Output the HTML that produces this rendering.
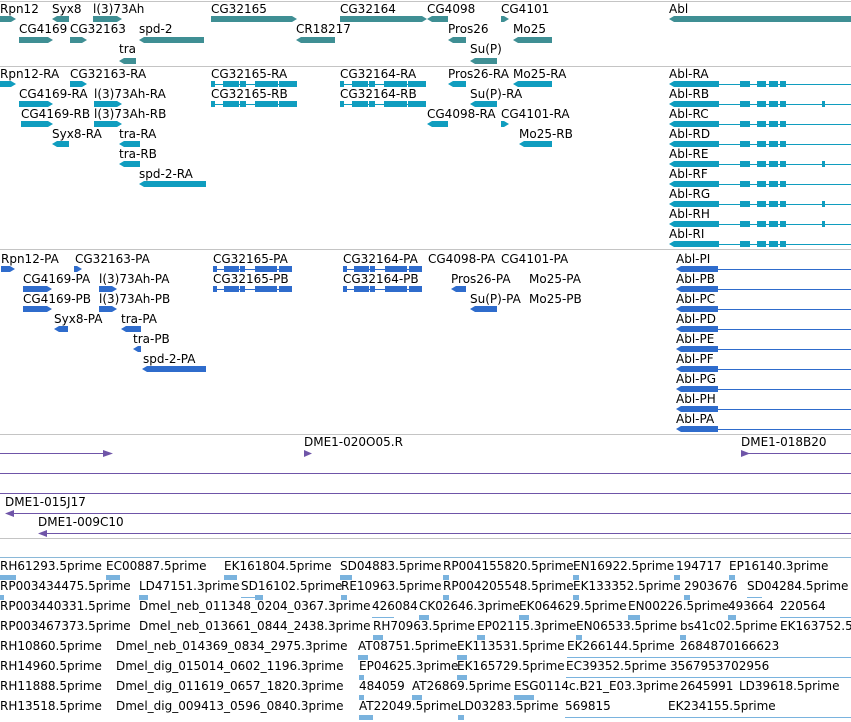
<!DOCTYPE html>
<html><head><meta charset="utf-8"><style>
body{margin:0;width:851px;height:722px;background:#fff;position:relative;overflow:hidden}
.t{position:absolute;font:12px "DejaVu Sans","Liberation Sans",sans-serif;line-height:14px;white-space:nowrap;color:#000}
.b{position:absolute;height:6px}
.g{background:#3f8f94}.c{background:#109dbf}.p{background:#2f6ccc}.v{background:#6f55a8}.s{background:#7ab3de}
.r{clip-path:polygon(0 0,calc(100% - 5px) 0,100% 50%,calc(100% - 5px) 100%,0 100%)}
.l{clip-path:polygon(5px 0,100% 0,100% 100%,5px 100%,0 50%)}
.hl{position:absolute;height:1px}
.gr{background:#c4c4c4}
</style></head><body>
<div class="hl gr" style="top:1px;left:0;width:851px"></div>
<div class="hl gr" style="top:66px;left:0;width:851px"></div>
<div class="hl gr" style="top:249px;left:0;width:851px"></div>
<div class="hl gr" style="top:434px;left:0;width:851px"></div>
<div class="hl gr" style="top:538px;left:0;width:851px"></div>
<div class="hl" style="top:557px;left:0;width:851px;background:#8ab8d8"></div>

<div class="t" style="left:0;top:2px">Rpn12</div><div class="b g r" style="left:0;top:16px;width:16px"></div>
<div class="t" style="left:52px;top:2px">Syx8</div><div class="b g l" style="left:52px;top:16px;width:17px"></div>
<div class="t" style="left:93px;top:2px">l(3)73Ah</div><div class="b g r" style="left:93px;top:16px;width:29px"></div>
<div class="t" style="left:211px;top:2px">CG32165</div><div class="b g r" style="left:211px;top:16px;width:86px"></div>
<div class="t" style="left:340px;top:2px">CG32164</div><div class="b g r" style="left:340px;top:16px;width:87px"></div>
<div class="t" style="left:427px;top:2px">CG4098</div><div class="b g l" style="left:427px;top:16px;width:21px"></div>
<div class="t" style="left:501px;top:2px">CG4101</div><div class="b g r" style="left:501px;top:16px;width:8px"></div>
<div class="t" style="left:669px;top:2px">Abl</div><div class="b g l" style="left:669px;top:16px;width:182px"></div>
<div class="t" style="left:19px;top:22px">CG4169</div><div class="b g r" style="left:19px;top:37px;width:34px"></div>
<div class="t" style="left:70px;top:22px">CG32163</div><div class="b g r" style="left:70px;top:37px;width:17px"></div>
<div class="t" style="left:139px;top:22px">spd-2</div><div class="b g l" style="left:139px;top:37px;width:65px"></div>
<div class="t" style="left:296px;top:22px">CR18217</div><div class="b g l" style="left:296px;top:37px;width:39px"></div>
<div class="t" style="left:448px;top:22px">Pros26</div><div class="b g l" style="left:448px;top:37px;width:18px"></div>
<div class="t" style="left:513px;top:22px">Mo25</div><div class="b g l" style="left:513px;top:37px;width:39px"></div>
<div class="t" style="left:119px;top:42px">tra</div><div class="b g l" style="left:119px;top:58px;width:17px"></div>
<div class="t" style="left:470px;top:42px">Su(P)</div><div class="b g l" style="left:470px;top:58px;width:27px"></div>

<div class="t" style="left:0;top:67px">Rpn12-RA</div><div class="b c r" style="left:0;top:81px;width:16px"></div>
<div class="t" style="left:70px;top:67px">CG32163-RA</div><div class="b c r" style="left:70px;top:81px;width:17px"></div>
<div class="t" style="left:211px;top:67px">CG32165-RA</div>
<div class="t" style="left:340px;top:67px">CG32164-RA</div>
<div class="t" style="left:448px;top:67px">Pros26-RA</div><div class="b c l" style="left:448px;top:81px;width:18px"></div>
<div class="t" style="left:513px;top:67px">Mo25-RA</div><div class="b c l" style="left:513px;top:81px;width:39px"></div>
<div class="t" style="left:19px;top:87px">CG4169-RA</div><div class="b c r" style="left:19px;top:101px;width:34px"></div>
<div class="t" style="left:94px;top:87px">l(3)73Ah-RA</div><div class="b c r" style="left:94px;top:101px;width:28px"></div>
<div class="t" style="left:211px;top:87px">CG32165-RB</div>
<div class="t" style="left:340px;top:87px">CG32164-RB</div>
<div class="t" style="left:470px;top:87px">Su(P)-RA</div><div class="b c l" style="left:470px;top:101px;width:27px"></div>
<div class="t" style="left:21px;top:107px">CG4169-RB</div><div class="b c r" style="left:21px;top:121px;width:32px"></div>
<div class="t" style="left:94px;top:107px">l(3)73Ah-RB</div><div class="b c r" style="left:94px;top:121px;width:28px"></div>
<div class="t" style="left:427px;top:107px">CG4098-RA</div><div class="b c l" style="left:427px;top:121px;width:21px"></div>
<div class="t" style="left:501px;top:107px">CG4101-RA</div><div class="b c r" style="left:501px;top:121px;width:8px"></div>
<div class="t" style="left:52px;top:127px">Syx8-RA</div><div class="b c l" style="left:52px;top:141px;width:17px"></div>
<div class="t" style="left:119px;top:127px">tra-RA</div><div class="b c l" style="left:119px;top:141px;width:21px"></div>
<div class="t" style="left:519px;top:127px">Mo25-RB</div><div class="b c l" style="left:519px;top:141px;width:33px"></div>
<div class="t" style="left:119px;top:147px">tra-RB</div><div class="b c l" style="left:119px;top:161px;width:21px"></div>
<div class="t" style="left:139px;top:167px">spd-2-RA</div><div class="b c l" style="left:139px;top:181px;width:67px"></div>

<svg style="position:absolute;left:0;top:0" width="851" height="722">
<g fill="#109dbf" stroke="#109dbf">
<g id="ex1"><line x1="211" y1="84.5" x2="297" y2="84.5"/><rect x="211" y="81" width="4" height="6" stroke="none"/><rect x="223" y="81" width="16" height="6" stroke="none"/><rect x="240" y="81" width="6" height="6" stroke="none"/><rect x="255" y="81" width="23" height="6" stroke="none"/><rect x="279" y="81" width="18" height="6" stroke="none"/></g>
<use href="#ex1" y="20"/>
<use href="#ex1" x="129"/><use href="#ex1" x="129" y="20"/>
<g id="abl"><line x1="719" y1="84.5" x2="851" y2="84.5"/><polygon points="669,84 674,81 719,81 719,87 674,87" stroke="none"/><rect x="740" y="81" width="10" height="6" stroke="none"/><rect x="757" y="81" width="9" height="6" stroke="none"/><rect x="769" y="81" width="9" height="6" stroke="none"/><rect x="780" y="81" width="6" height="6" stroke="none"/></g>
<use href="#abl" y="20"/><use href="#abl" y="40"/><use href="#abl" y="60"/><use href="#abl" y="80"/><use href="#abl" y="100"/><use href="#abl" y="120"/><use href="#abl" y="140"/><use href="#abl" y="160"/>
<rect x="822" y="101" width="3" height="6" stroke="none"/><rect x="822" y="161" width="3" height="6" stroke="none"/><rect x="822" y="201" width="3" height="6" stroke="none"/><rect x="822" y="221" width="3" height="6" stroke="none"/>
</g>
<g fill="#2f6ccc" stroke="#2f6ccc">
<g id="pex"><line x1="213" y1="269.5" x2="292" y2="269.5"/><rect x="213" y="266" width="4" height="6" stroke="none"/><rect x="224" y="266" width="15" height="6" stroke="none"/><rect x="240" y="266" width="5" height="6" stroke="none"/><rect x="255" y="266" width="22" height="6" stroke="none"/><rect x="279" y="266" width="13" height="6" stroke="none"/></g>
<use href="#pex" y="20"/><use href="#pex" x="130"/><use href="#pex" x="130" y="20"/>
<g id="pabl"><line x1="718" y1="269.5" x2="851" y2="269.5"/><polygon points="676,269 681,266 718,266 718,272 681,272" stroke="none"/></g>
<use href="#pabl" y="20"/><use href="#pabl" y="40"/><use href="#pabl" y="60"/><use href="#pabl" y="80"/><use href="#pabl" y="100"/><use href="#pabl" y="120"/><use href="#pabl" y="140"/><use href="#pabl" y="160"/>
</g>
<g stroke="#6f55a8" fill="#6f55a8">
<line x1="0" y1="453.5" x2="108" y2="453.5"/><polygon points="103,450 113,453.5 103,457" stroke="none"/>
<polygon points="304,450 312,453.5 304,457" stroke="none"/>
<line x1="745" y1="453.5" x2="851" y2="453.5"/><polygon points="741,450 750,453.5 741,457" stroke="none"/>
<line x1="0" y1="473.5" x2="851" y2="473.5"/>
<line x1="0" y1="493.5" x2="851" y2="493.5"/>
<line x1="10" y1="513.5" x2="851" y2="513.5"/><polygon points="5,513.5 14,510 14,517" stroke="none"/>
<line x1="44" y1="533.5" x2="851" y2="533.5"/><polygon points="38,533.5 47,530 47,537" stroke="none"/>
</g>
<g fill="#7ab3de" stroke="#7ab3de">
<rect x="0" y="575" width="16" height="5" stroke="none"/><rect x="106" y="575" width="14" height="5" stroke="none"/><rect x="224" y="575" width="13" height="5" stroke="none"/><rect x="340" y="575" width="12" height="5" stroke="none"/><rect x="443" y="575" width="6" height="5" stroke="none"/><rect x="573" y="575" width="6" height="5" stroke="none"/><rect x="674" y="575" width="6" height="5" stroke="none"/><rect x="729" y="575" width="6" height="5" stroke="none"/>
<rect x="0" y="595" width="4" height="5" stroke="none"/><rect x="139" y="595" width="9" height="5" stroke="none"/><line x1="241" y1="597.5" x2="262" y2="597.5"/><rect x="255" y="595" width="8" height="5" stroke="none"/><rect x="341" y="595" width="6" height="5" stroke="none"/><rect x="443" y="595" width="6" height="5" stroke="none"/><rect x="573" y="595" width="6" height="5" stroke="none"/><rect x="684" y="595" width="6" height="5" stroke="none"/><line x1="747" y1="597.5" x2="762" y2="597.5"/>
<line x1="372" y1="617.5" x2="394" y2="617.5"/><rect x="419" y="615" width="10" height="5" stroke="none"/><rect x="519" y="615" width="10" height="5" stroke="none"/><rect x="628" y="615" width="12" height="5" stroke="none"/><rect x="728" y="615" width="8" height="5" stroke="none"/><line x1="780" y1="617.5" x2="851" y2="617.5"/>
<rect x="373" y="635" width="10" height="5" stroke="none"/><rect x="477" y="635" width="8" height="5" stroke="none"/><rect x="576" y="635" width="6" height="5" stroke="none"/><rect x="680" y="635" width="6" height="5" stroke="none"/>
<rect x="358" y="655" width="10" height="5" stroke="none"/><rect x="457" y="655" width="10" height="5" stroke="none"/><line x1="567" y1="657.5" x2="851" y2="657.5"/>
<rect x="359" y="675" width="5" height="5" stroke="none"/><rect x="457" y="675" width="10" height="5" stroke="none"/><line x1="566" y1="677.5" x2="851" y2="677.5"/>
<rect x="359" y="695" width="5" height="5" stroke="none"/><rect x="412" y="695" width="10" height="5" stroke="none"/><rect x="514" y="695" width="20" height="5" stroke="none"/>
<rect x="359" y="715" width="14" height="5" stroke="none"/><rect x="458" y="715" width="6" height="5" stroke="none"/><line x1="565" y1="717.5" x2="851" y2="717.5"/>
</g>
</svg>
<div class="t" style="left:669px;top:67px">Abl-RA</div>
<div class="t" style="left:669px;top:87px">Abl-RB</div>
<div class="t" style="left:669px;top:107px">Abl-RC</div>
<div class="t" style="left:669px;top:127px">Abl-RD</div>
<div class="t" style="left:669px;top:147px">Abl-RE</div>
<div class="t" style="left:669px;top:167px">Abl-RF</div>
<div class="t" style="left:669px;top:187px">Abl-RG</div>
<div class="t" style="left:669px;top:207px">Abl-RH</div>
<div class="t" style="left:669px;top:227px">Abl-RI</div>

<div class="t" style="left:1px;top:252px">Rpn12-PA</div><div class="b p r" style="left:1px;top:266px;width:14px"></div>
<div class="t" style="left:75px;top:252px">CG32163-PA</div><div class="b p r" style="left:74px;top:266px;width:8px"></div>
<div class="t" style="left:213px;top:252px">CG32165-PA</div>
<div class="t" style="left:343px;top:252px">CG32164-PA</div>
<div class="t" style="left:428px;top:252px">CG4098-PA</div>
<div class="t" style="left:501px;top:252px">CG4101-PA</div>
<div class="t" style="left:23px;top:272px">CG4169-PA</div><div class="b p r" style="left:23px;top:286px;width:29px"></div>
<div class="t" style="left:99px;top:272px">l(3)73Ah-PA</div><div class="b p r" style="left:99px;top:286px;width:18px"></div>
<div class="t" style="left:213px;top:272px">CG32165-PB</div>
<div class="t" style="left:343px;top:272px">CG32164-PB</div>
<div class="t" style="left:451px;top:272px">Pros26-PA</div><div class="b p l" style="left:451px;top:286px;width:15px"></div>
<div class="t" style="left:529px;top:272px">Mo25-PA</div>
<div class="t" style="left:23px;top:292px">CG4169-PB</div><div class="b p r" style="left:23px;top:306px;width:29px"></div>
<div class="t" style="left:99px;top:292px">l(3)73Ah-PB</div><div class="b p r" style="left:99px;top:306px;width:18px"></div>
<div class="t" style="left:470px;top:292px">Su(P)-PA</div><div class="b p l" style="left:470px;top:306px;width:27px"></div>
<div class="t" style="left:529px;top:292px">Mo25-PB</div>
<div class="t" style="left:54px;top:312px">Syx8-PA</div><div class="b p l" style="left:54px;top:326px;width:14px"></div>
<div class="t" style="left:121px;top:312px">tra-PA</div><div class="b p l" style="left:121px;top:326px;width:20px"></div>
<div class="t" style="left:133px;top:332px">tra-PB</div><div class="b p l" style="left:133px;top:346px;width:8px"></div>
<div class="t" style="left:143px;top:352px">spd-2-PA</div><div class="b p l" style="left:142px;top:366px;width:64px"></div>
<div class="t" style="left:676px;top:252px">Abl-PI</div>
<div class="t" style="left:676px;top:272px">Abl-PB</div>
<div class="t" style="left:676px;top:292px">Abl-PC</div>
<div class="t" style="left:676px;top:312px">Abl-PD</div>
<div class="t" style="left:676px;top:332px">Abl-PE</div>
<div class="t" style="left:676px;top:352px">Abl-PF</div>
<div class="t" style="left:676px;top:372px">Abl-PG</div>
<div class="t" style="left:676px;top:392px">Abl-PH</div>
<div class="t" style="left:676px;top:412px">Abl-PA</div>

<div class="t" style="left:304px;top:435px">DME1-020O05.R</div>
<div class="t" style="left:741px;top:435px">DME1-018B20</div>
<div class="t" style="left:5px;top:495px">DME1-015J17</div>
<div class="t" style="left:38px;top:515px">DME1-009C10</div>

<div class="t" style="left:0;top:559px">RH61293.5prime</div><div class="t" style="left:106px;top:559px">EC00887.5prime</div><div class="t" style="left:224px;top:559px">EK161804.5prime</div><div class="t" style="left:340px;top:559px">SD04883.5prime</div><div class="t" style="left:443px;top:559px">RP004155820.5prime</div><div class="t" style="left:573px;top:559px">EN16922.5prime</div><div class="t" style="left:676px;top:559px">194717</div><div class="t" style="left:729px;top:559px">EP16140.3prime</div>
<div class="t" style="left:0;top:579px">RP003434475.5prime</div><div class="t" style="left:139px;top:579px">LD47151.3prime</div><div class="t" style="left:241px;top:579px">SD16102.5prime</div><div class="t" style="left:341px;top:579px">RE10963.5prime</div><div class="t" style="left:443px;top:579px">RP004205548.5prime</div><div class="t" style="left:573px;top:579px">EK133352.5prime</div><div class="t" style="left:684px;top:579px">2903676</div><div class="t" style="left:747px;top:579px">SD04284.5prime</div>
<div class="t" style="left:0;top:599px">RP003440331.5prime</div><div class="t" style="left:139px;top:599px">Dmel_neb_011348_0204_0367.3prime</div><div class="t" style="left:372px;top:599px">426084</div><div class="t" style="left:419px;top:599px">CK02646.3prime</div><div class="t" style="left:519px;top:599px">EK064629.5prime</div><div class="t" style="left:628px;top:599px">EN00226.5prime</div><div class="t" style="left:728px;top:599px">493664</div><div class="t" style="left:780px;top:599px">220564</div>
<div class="t" style="left:0;top:619px">RP003467373.5prime</div><div class="t" style="left:139px;top:619px">Dmel_neb_013661_0844_2438.3prime</div><div class="t" style="left:373px;top:619px">RH70963.5prime</div><div class="t" style="left:477px;top:619px">EP02115.3prime</div><div class="t" style="left:576px;top:619px">EN06533.5prime</div><div class="t" style="left:680px;top:619px">bs41c02.5prime</div><div class="t" style="left:780px;top:619px">EK163752.5</div>
<div class="t" style="left:0;top:639px">RH10860.5prime</div><div class="t" style="left:116px;top:639px">Dmel_neb_014369_0834_2975.3prime</div><div class="t" style="left:358px;top:639px">AT08751.5prime</div><div class="t" style="left:457px;top:639px">EK113531.5prime</div><div class="t" style="left:567px;top:639px">EK266144.5prime</div><div class="t" style="left:680px;top:639px">2684870166623</div>
<div class="t" style="left:0;top:659px">RH14960.5prime</div><div class="t" style="left:116px;top:659px">Dmel_dig_015014_0602_1196.3prime</div><div class="t" style="left:359px;top:659px">EP04625.3prime</div><div class="t" style="left:457px;top:659px">EK165729.5prime</div><div class="t" style="left:566px;top:659px">EC39352.5prime</div><div class="t" style="left:670px;top:659px">3567953702956</div>
<div class="t" style="left:0;top:679px">RH11888.5prime</div><div class="t" style="left:116px;top:679px">Dmel_dig_011619_0657_1820.3prime</div><div class="t" style="left:359px;top:679px">484059</div><div class="t" style="left:412px;top:679px">AT26869.5prime</div><div class="t" style="left:514px;top:679px">ESG0114c.B21_E03.3prime</div><div class="t" style="left:680px;top:679px">2645991</div><div class="t" style="left:739px;top:679px">LD39618.5prime</div>
<div class="t" style="left:0;top:699px">RH13518.5prime</div><div class="t" style="left:116px;top:699px">Dmel_dig_009413_0596_0840.3prime</div><div class="t" style="left:359px;top:699px">AT22049.5prime</div><div class="t" style="left:458px;top:699px">LD03283.5prime</div><div class="t" style="left:565px;top:699px">569815</div><div class="t" style="left:668px;top:699px">EK234155.5prime</div>
</body></html>
